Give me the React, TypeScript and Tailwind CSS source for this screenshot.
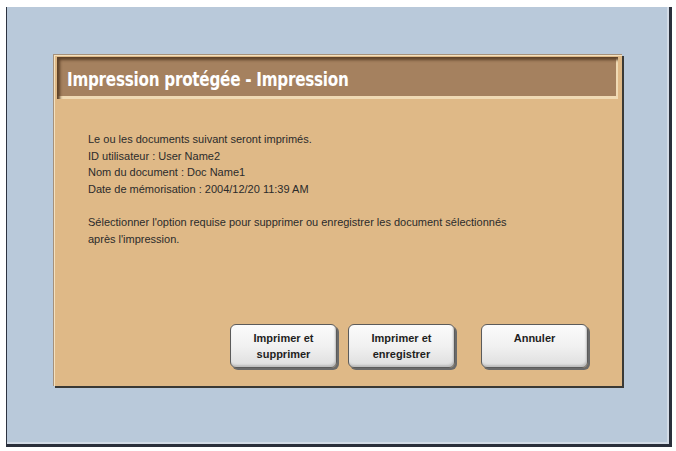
import React from 'react';

const bodyFont = { fontFamily: '"Liberation Sans", Arial, sans-serif' };

function PanelButton({ lines, className }: { lines: string[]; className?: string }) {
    return (
        <button
            className={
                'w-[107px] h-[44px] rounded-[6px] border border-[#5b5b5b] bg-gradient-to-b from-[#fbfbfb] via-[#f1f1f1] to-[#dedede] shadow-[2px_2px_0_#6a6a6a,inset_-1px_-2px_2px_#bdbdbd] flex flex-col items-center justify-start pt-[5px] text-[11px] font-bold leading-[16px] text-[#1e1e1e] ' +
                (className ?? '')
            }
            style={bodyFont}
        >
            {lines.map((l) => (
                <span key={l}>{l}</span>
            ))}
        </button>
    );
}

export default function App() {
    return (
        <div className="w-[676px] h-[451px] bg-white overflow-hidden pt-[7px] pl-[6px]">
            {/* Blue frame */}
            <div className="w-[666px] h-[440px] bg-[#b9c9da] border-l border-l-[#2d3340] border-r-[3px] border-r-[#2a2f3b] border-b-[3px] border-b-[#2a2f3b] shadow-[inset_-2px_-2px_0_#d2dbe6] pt-[47px] pl-[46px]">
                {/* Dialog panel */}
                <div className="w-[569px] h-[332px] bg-[#dfb987] border-t border-l border-[#a6917a] shadow-[2px_2px_0_#3a3935,inset_1px_1px_0_#f3e1c0] flex flex-col">
                    {/* Title bar */}
                    <div className="mt-[2px] ml-[3px] w-[561px] h-[42px] bg-[#a5815f] shadow-[inset_3px_3px_3px_#5d4128,inset_-2px_-3px_0_#f0dab4] flex items-center pl-[10px] pt-[2px]">
                        <span
                            className="text-white font-bold text-[20px] tracking-[-0.3px] origin-left scale-x-[0.845] inline-block whitespace-nowrap"
                            style={{ fontFamily: '"DejaVu Sans Condensed", "Liberation Sans Narrow", "DejaVu Sans", sans-serif' }}
                        >
                            Impression protégée - Impression
                        </span>
                    </div>

                    {/* Message */}
                    <div className="pl-[34px] pt-[32px] text-[11px] leading-[16.6px] text-[#2b2b2b]" style={bodyFont}>
                        <div>Le ou les documents suivant seront imprimés.</div>
                        <div>ID utilisateur : User Name2</div>
                        <div>Nom du document : Doc Name1</div>
                        <div>Date de mémorisation : 2004/12/20 11:39 AM</div>
                        <div className="h-[16.6px]" />
                        <div>Sélectionner l'option requise pour supprimer ou enregistrer les document sélectionnés</div>
                        <div>après l'impression.</div>
                    </div>

                    {/* Buttons */}
                    <div className="mt-auto mb-[18px] flex justify-end pr-[34px]">
                        <PanelButton lines={['Imprimer et', 'supprimer']} />
                        <PanelButton lines={['Imprimer et', 'enregistrer']} className="ml-[11px]" />
                        <PanelButton lines={['Annuler']} className="ml-[26px]" />
                    </div>
                </div>
            </div>
        </div>
    );
}
